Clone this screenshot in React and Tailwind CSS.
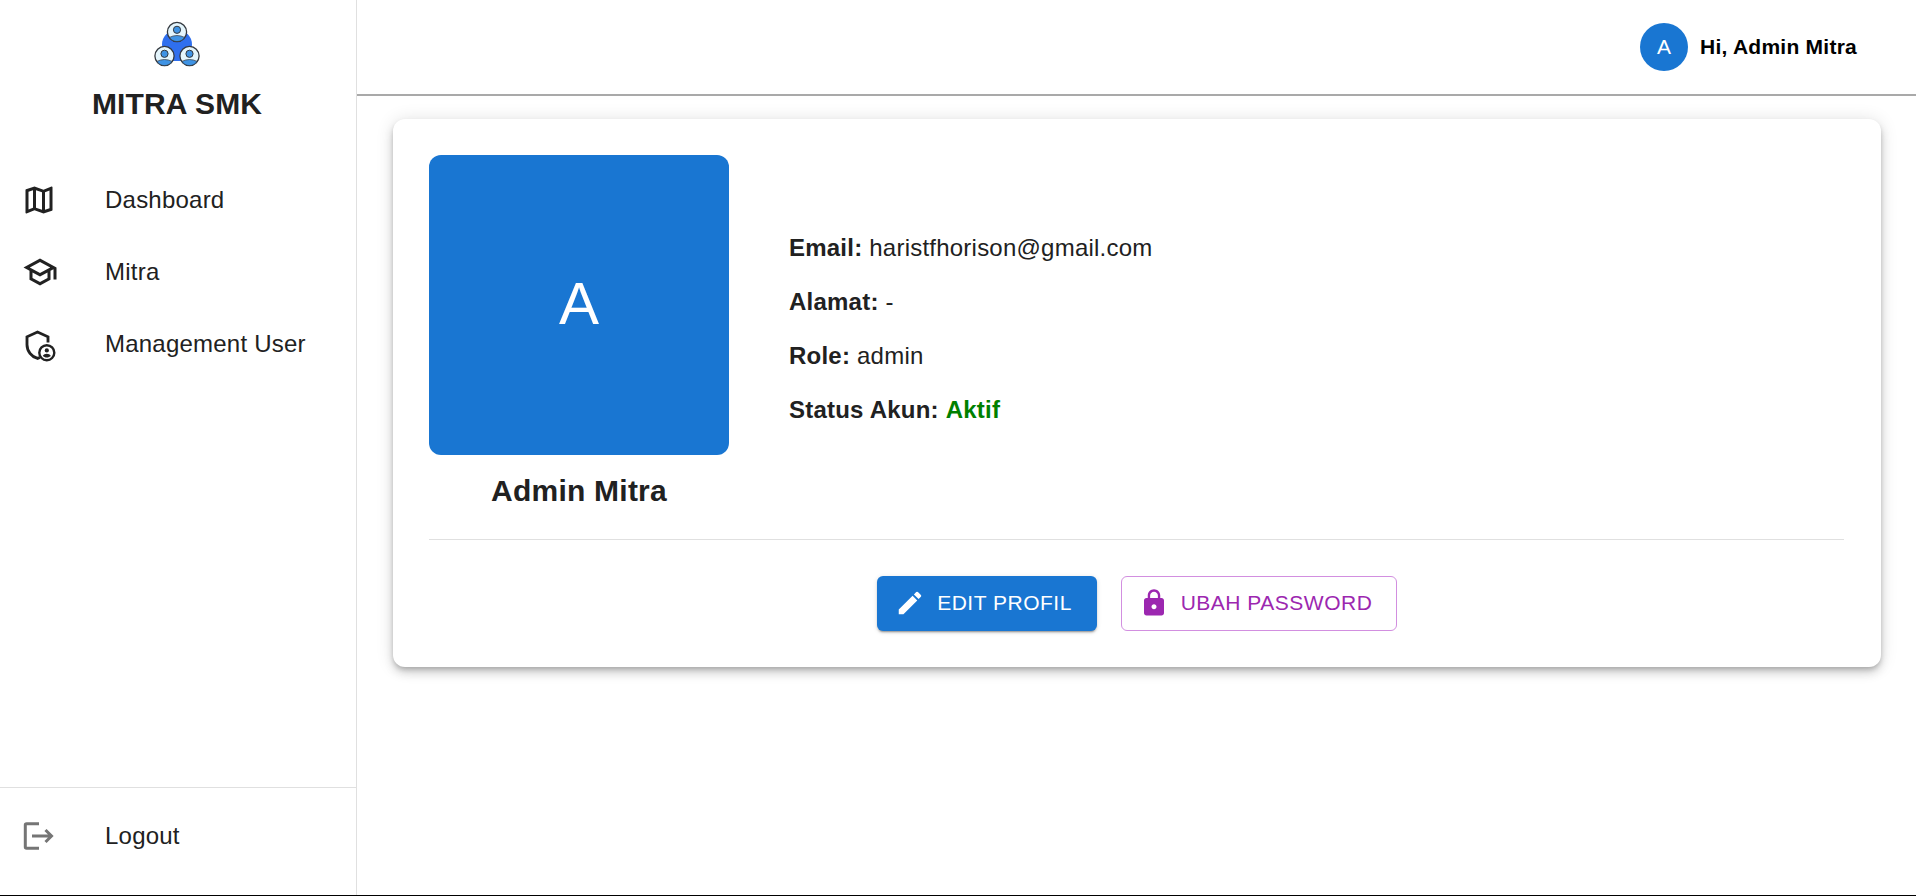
import React from 'react';

const fontStack = { fontFamily: '"Liberation Sans", Arial, sans-serif' };

function Icon({ d, className }) {
  return (
    <svg viewBox="0 0 24 24" fill="currentColor" className={className}>
      <path d={d} />
    </svg>
  );
}

const icons = {
  map: 'm20.5 3-.16.03L15 5.1 9 3 3.36 4.9c-.21.07-.36.25-.36.48V20.5c0 .28.22.5.5.5l.16-.03L9 18.9l6 2.1 5.64-1.9c.21-.07.36-.25.36-.48V3.5c0-.28-.22-.5-.5-.5zM10 5.47l4 1.4v11.66l-4-1.4V5.47zm-5 .99 3-1.01v11.7l-3 1.16V6.46zm14 11.08-3 1.01V6.86l3-1.16v11.84z',
  school: 'M12 3 1 9l4 2.18v6L12 21l7-3.82v-6l2-1.09V17h2V9L12 3zm6.82 6L12 12.72 5.18 9 12 5.28 18.82 9zM17 15.99l-5 2.73-5-2.73v-3.72L12 15l5-2.73v3.72z',
  edit: 'M3 17.25V21h3.75L17.81 9.94l-3.75-3.75L3 17.25zM20.71 7.04c.39-.39.39-1.02 0-1.41l-2.34-2.34a.9959.9959 0 0 0-1.41 0l-1.83 1.83 3.75 3.75 1.83-1.83z',
  lock: 'M18 8h-1V6c0-2.76-2.24-5-5-5S7 3.24 7 6v2H6c-1.1 0-2 .9-2 2v10c0 1.1.9 2 2 2h12c1.1 0 2-.9 2-2V10c0-1.1-.9-2-2-2zm-6 9c-1.1 0-2-.9-2-2s.9-2 2-2 2 .9 2 2-.9 2-2 2zm3.1-9H8.9V6c0-1.71 1.39-3.1 3.1-3.1 1.71 0 3.1 1.39 3.1 3.1v2z',
};

function ShieldUserIcon({ className }) {
  return (
    <svg viewBox="0 0 24 24" fill="none" stroke="currentColor" className={className}>
      <path d="M18 11V7.2L11 4 4 7.2v5.3c0 4.2 3 8 7 9.1l1.6-.6" strokeWidth="1.9" />
      <circle cx="17.2" cy="17.8" r="5" strokeWidth="1.6" />
      <circle cx="17.2" cy="16.3" r="1.4" fill="currentColor" stroke="none" />
      <path d="M14.5 20c.5-1 1.7-1.5 2.7-1.5s2.2.5 2.7 1.5c-.7.6-1.7 1-2.7 1s-2-.4-2.7-1z" fill="currentColor" stroke="none" />
    </svg>
  );
}

function LogoutIcon({ className }) {
  return (
    <svg viewBox="0 0 36 36" fill="none" stroke="currentColor" strokeWidth="3" className={className}>
      <path d="M18 5.7H5.6Q4.3 5.7 4.3 7v22q0 1.3 1.3 1.3H18" />
      <path d="M11 18h19M24.5 12l6 6-6 6" />
    </svg>
  );
}

function LogoPerson({ cx, cy }) {
  return (
    <g>
      <circle cx={cx} cy={cy} r="9.6" fill="#e4f5fc" stroke="#33383f" strokeWidth="1.3" />
      <path d={`M${cx - 7.6} ${cy + 5.4} Q${cx} ${cy + 1.6} ${cx + 7.6} ${cy + 5.4} A9 9 0 0 1 ${cx - 7.6} ${cy + 5.4}z`} fill="#3f93e4" stroke="#33383f" strokeWidth="0.7" />
      <circle cx={cx} cy={cy - 2.2} r="3.6" fill="#3f93e4" stroke="#33383f" strokeWidth="1" />
    </g>
  );
}

function Logo() {
  return (
    <svg viewBox="0 0 48 48" className="w-12 h-12">
      <circle cx="24" cy="23.5" r="15" fill="#2f6fee" />
      <rect x="20" y="30" width="8" height="10" fill="#2f6fee" />
      <LogoPerson cx={24} cy={11} />
      <LogoPerson cx={11.5} cy={35} />
      <LogoPerson cx={36.5} cy={35} />
    </svg>
  );
}

function NavItem({ icon, label, iconColor = 'text-[#212121]' }) {
  return (
    <div className="flex items-center h-[72px] pl-[21px]">
      <div className={`w-[84px] shrink-0 ${iconColor}`}>{icon}</div>
      <span className="text-[24px] tracking-[0.225px] text-[#212121]">{label}</span>
    </div>
  );
}

function InfoRow({ label, children }) {
  return (
    <p className="text-[24px] leading-[36px] tracking-[0.225px] text-[#212121]">
      <b>{label}</b> {children}
    </p>
  );
}

export default function App() {
  return (
    <div className="flex h-screen bg-white border-b border-black overflow-hidden" style={fontStack}>
      <aside className="w-[357px] shrink-0 border-r border-[#e0e0e0] flex flex-col">
        <div className="flex flex-col items-center pt-[21px] pr-[2px] h-[164px]">
          <Logo />
          <h1 className="mt-[17px] text-[30px] leading-[36px] tracking-[0.15px] font-bold text-[#212121]">MITRA SMK</h1>
        </div>
        <nav className="flex-1">
          <NavItem label="Dashboard" icon={<Icon d={icons.map} className="w-9 h-9" />} />
          <NavItem label="Mitra" icon={<Icon d={icons.school} className="w-9 h-9 ml-[1px]" />} />
          <NavItem label="Management User" icon={<ShieldUserIcon className="w-9 h-9" />} />
        </nav>
        <div className="border-t border-[#e0e0e0] h-[108px] pt-[12px]">
          <NavItem label="Logout" iconColor="text-[#757575]" icon={<LogoutIcon className="w-9 h-9" />} />
        </div>
      </aside>

      <div className="flex-1 min-w-0 flex flex-col">
        <header className="h-[96px] shrink-0 flex items-center justify-end pr-[59px] border-b-2 border-[#a9a9a9] pb-[1px]">
          <div className="w-12 h-12 rounded-full bg-[#1976d2] text-white flex items-center justify-center text-[21px]">A</div>
          <span className="ml-3 text-[21px] tracking-[0.25px] font-bold text-black">Hi, Admin Mitra</span>
        </header>

        <main className="pl-[36px] pr-[35px] pt-[23px]">
          <div className="bg-white rounded-[12px] p-[36px] pr-[37px] h-[548px] shadow-[0_3px_5px_-1px_rgba(0,0,0,0.2),0_6px_10px_0_rgba(0,0,0,0.14),0_1px_18px_0_rgba(0,0,0,0.12)]">
            <div className="flex h-[385px] border-b border-[#e0e0e0]">
              <div className="w-[300px] shrink-0 flex flex-col items-center">
                <div className="w-[300px] h-[300px] rounded-[12px] bg-[#1976d2] text-white flex items-center justify-center text-[60px] pb-[2px]">A</div>
                <div className="mt-[18px] text-[30px] leading-[36px] tracking-[0.225px] font-bold text-[#212121]">Admin Mitra</div>
              </div>
              <div className="ml-[60px] h-[300px] pt-[48px] flex flex-col justify-center gap-[18px]">
                <InfoRow label="Email:">haristfhorison@gmail.com</InfoRow>
                <InfoRow label="Alamat:">-</InfoRow>
                <InfoRow label="Role:">admin</InfoRow>
                <InfoRow label="Status Akun:"><b className="text-[#008000]">Aktif</b></InfoRow>
              </div>
            </div>
            <div className="flex justify-center gap-6 pt-[36px]">
              <button className="h-[55px] w-[220px] pr-[6px] pb-[1px] rounded-[6px] bg-[#1976d2] text-white text-[21px] tracking-[0.5px] flex items-center justify-center gap-3 shadow-[0_3px_1px_-2px_rgba(0,0,0,0.2),0_2px_2px_0_rgba(0,0,0,0.14),0_1px_5px_0_rgba(0,0,0,0.12)]">
                <Icon d={icons.edit} className="w-[30px] h-[30px]" />
                EDIT PROFIL
              </button>
              <button className="h-[55px] w-[276px] pr-[6px] pb-[1px] rounded-[6px] border border-[#d28fe0] text-[#9c27b0] text-[21px] tracking-[0.5px] flex items-center justify-center gap-3">
                <Icon d={icons.lock} className="w-[30px] h-[30px]" />
                UBAH PASSWORD
              </button>
            </div>
          </div>
        </main>
      </div>
    </div>
  );
}
